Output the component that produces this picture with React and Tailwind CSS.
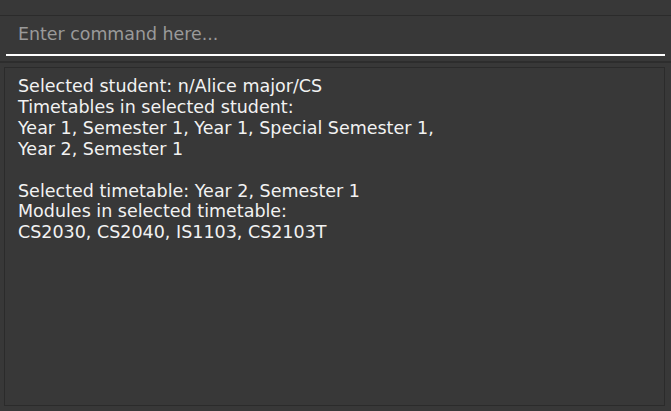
export default function App() {
  const lines = [
    "Selected student: n/Alice major/CS",
    "Timetables in selected student:",
    "Year 1, Semester 1, Year 1, Special Semester 1,",
    "Year 2, Semester 1",
    "\u00a0",
    "Selected timetable: Year 2, Semester 1",
    "Modules in selected timetable:",
    "CS2030, CS2040, IS1103, CS2103T",
  ];
  return (
    <div className="w-[671px] h-[411px] bg-[#383838] font-['DejaVu_Sans',sans-serif] flex flex-col overflow-hidden">
      <div className="h-[15px] shrink-0" />
      <div className="h-px shrink-0 bg-[#2b2b2b]" />
      <div className="h-[45px] shrink-0 px-[6px] flex flex-col">
        <div className="h-[38px] flex items-center pl-[12px] text-[#9a9a9a] text-[17.4px] leading-none">
          Enter command here...
        </div>
        <div className="h-[2px] bg-white" />
      </div>
      <div className="h-[2px] shrink-0 bg-[#2d2d2d]" />
      <div className="flex-1 pl-[4px] pr-[6px] pt-[4px] pb-[5px] min-h-0">
        <div className="h-full border border-[#2b2b2b] px-[13px] pt-[8px] text-[#f2f2f2] text-[17.5px] leading-[20.9px]">
          {lines.map((l, i) => (
            <div key={i}>{l}</div>
          ))}
        </div>
      </div>
    </div>
  );
}
